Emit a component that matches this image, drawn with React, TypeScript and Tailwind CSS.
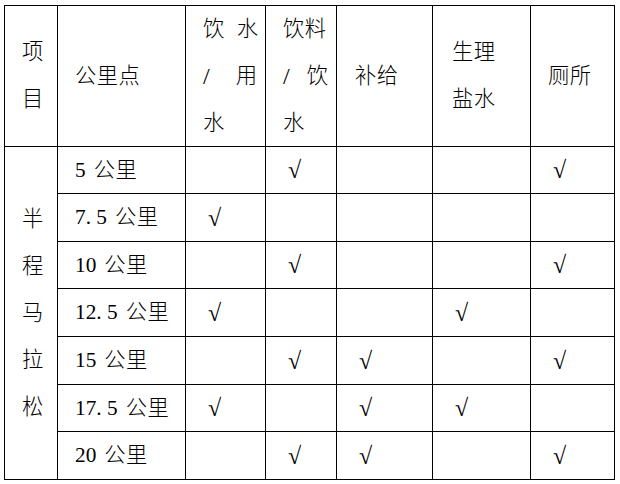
import React from "react";

const CHECK = "√";

type Row = { km: string; marks: boolean[] };

const rows: Row[] = [
  { km: "5", marks: [false, true, false, false, true] },
  { km: "7.5", marks: [true, false, false, false, false] },
  { km: "10", marks: [false, true, false, false, true] },
  { km: "12.5", marks: [true, false, false, true, false] },
  { km: "15", marks: [false, true, true, false, true] },
  { km: "17.5", marks: [true, false, true, true, false] },
  { km: "20", marks: [false, true, true, false, true] },
];

function Num({ v }: { v: string }) {
  return (
    <span className="font-['Liberation_Serif',serif] font-normal">
      {v.split("").map((c, i) =>
        c === "." ? (
          <span key={i} className="inline-block w-[10.67px]">
            .
          </span>
        ) : (
          <span key={i}>{c}</span>
        )
      )}
    </span>
  );
}

function Cell({ children, className = "" }: { children?: React.ReactNode; className?: string }) {
  return <div className={"bg-white flex " + className}>{children}</div>;
}

export default function App() {
  return (
    <div className="w-[620px] h-[484px] bg-white pl-[4px] pt-[5px] text-black font-['Liberation_Serif','Noto_Sans_CJK_SC',serif] font-light text-[21.3px] leading-[47px]">
      <div className="grid w-fit gap-px bg-black p-px grid-cols-[52px_127px_79px_70px_95px_97px_83px] grid-rows-[140px_46px_47px_46px_47px_47px_46px_47px]">
        {/* header */}
        <Cell className="flex-col justify-center pl-[17px]">
          <span>项</span>
          <span>目</span>
        </Cell>
        <Cell className="items-center pl-[17px]">
          <span className="tracking-[0.5px]">公里点</span>
        </Cell>
        <Cell className="flex-col justify-center pl-[17px]">
          <div className="flex justify-between w-[55px]">
            <span>饮</span>
            <span>水</span>
          </div>
          <div className="flex justify-between w-[54px]">
            <span className="font-normal text-[24px]">/</span>
            <span>用</span>
          </div>
          <div>水</div>
        </Cell>
        <Cell className="flex-col justify-center pl-[17px]">
          <div className="flex justify-between w-[43px]">
            <span>饮</span>
            <span>料</span>
          </div>
          <div className="flex justify-between w-[45px]">
            <span className="font-normal text-[24px]">/</span>
            <span>饮</span>
          </div>
          <div>水</div>
        </Cell>
        <Cell className="items-center pl-[18px]">
          <span className="tracking-[0.5px]">补给</span>
        </Cell>
        <Cell className="flex-col justify-center pl-[19px]">
          <span className="tracking-[0.5px]">生理</span>
          <span className="tracking-[0.5px]">盐水</span>
        </Cell>
        <Cell className="items-center pl-[17px]">
          <span className="tracking-[0.5px]">厕所</span>
        </Cell>

        {/* merged first column */}
        <Cell className="row-span-7 row-start-2 col-start-1 flex-col justify-center pl-[17px]">
          <span>半</span>
          <span>程</span>
          <span>马</span>
          <span>拉</span>
          <span>松</span>
        </Cell>

        {rows.map((r) => (
          <React.Fragment key={r.km}>
            <Cell className="col-start-2 items-center pl-[17px]">
              <Num v={r.km} />
              <span className="inline-block w-[8px]" />
              <span className="tracking-[0.5px]">公里</span>
            </Cell>
            {r.marks.map((m, i) => (
              <Cell key={i} className="items-center pl-[22px]">
                {m ? (
                  <span className="font-['Liberation_Serif',serif] font-bold text-[24px] leading-none">
                    {CHECK}
                  </span>
                ) : null}
              </Cell>
            ))}
          </React.Fragment>
        ))}
      </div>
    </div>
  );
}
